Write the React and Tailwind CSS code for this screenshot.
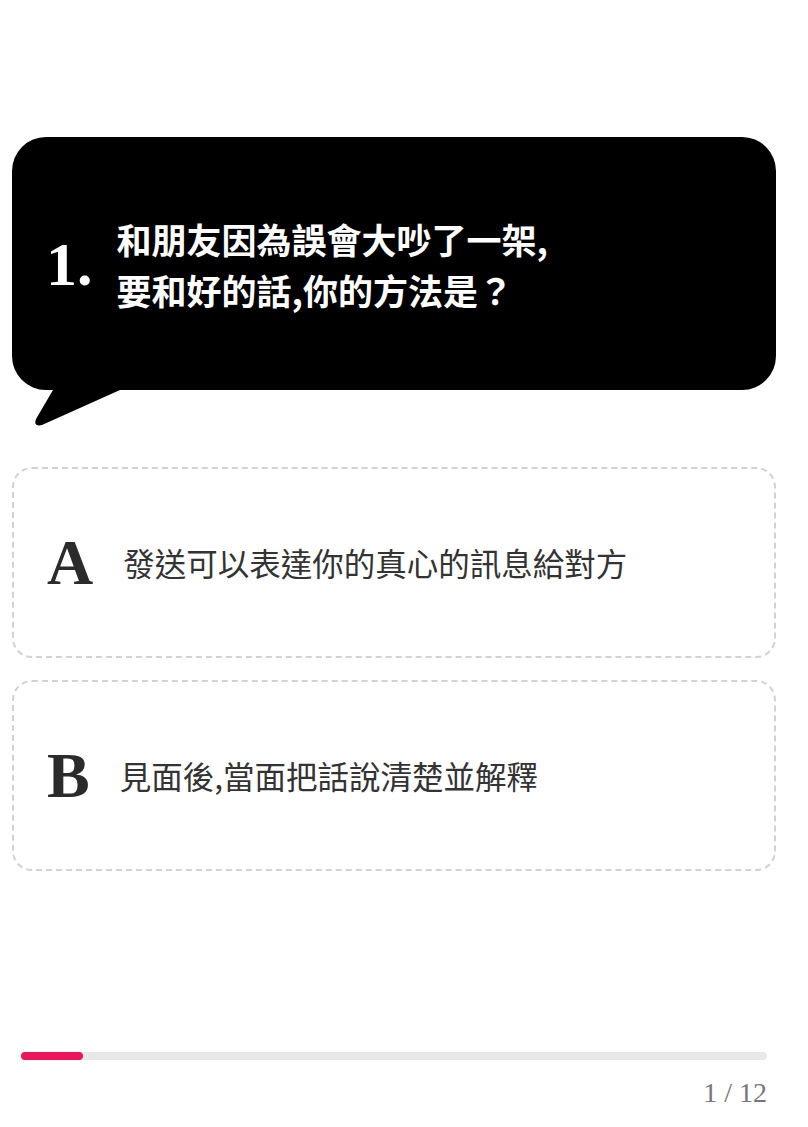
const OPTIONS = [
  { key: "A", text: "發送可以表達你的真心的訊息給對方" },
  { key: "B", text: "見面後,當面把話說清楚並解釋" },
];

const serif = "font-['Liberation_Serif',serif]";
const cjk = "font-['Noto_Sans_CJK_TC','Noto_Sans',sans-serif]";

const App = () => {
  const current = 1;
  const total = 12;

  return (
    <div className="min-h-screen bg-white pl-3 pr-[32px] pt-[137px]">
      {/* question bubble */}
      <div className="relative">
        <div className="relative z-10 flex h-[253px] items-center rounded-[34px] bg-black pl-[34px]">
          <span className={`${serif} text-[62px] font-bold leading-none text-white`}>1.</span>
          <p className={`${cjk} ml-[24px] text-[35px] font-bold leading-[51px] text-white`}>
            和朋友因為誤會大吵了一架,
            <br />
            要和好的話,你的方法是？
          </p>
        </div>
        <svg className="absolute left-0 top-[230px] z-0 h-[70px] w-[130px]" viewBox="0 230 130 70">
          <path d="M41 238 L41 253 L24 282 Q21 290 30 288 L108 253 L110 238 Z" fill="#000" />
        </svg>
      </div>

      {/* options */}
      <div className="mt-[77px] flex flex-col gap-[22px]">
        {OPTIONS.map((o) => (
          <div
            key={o.key}
            className="flex h-[191px] items-center rounded-[20px] border-2 border-dashed border-[#d2d2d2] pl-[33px]"
          >
            <span className={`${serif} text-[64px] font-bold leading-none text-[#2b2b2b]`}>{o.key}</span>
            <span className={`${cjk} ml-[30px] text-[31.5px] text-[#333]`}>{o.text}</span>
          </div>
        ))}
      </div>

      {/* progress */}
      <div className="mt-[181px] pl-[9px] pr-[9px]">
        <div className="h-[8px] w-full rounded-full bg-[#e8e8ec]">
          <div className="h-full rounded-full bg-[#f0145a]" style={{ width: `${(current / total) * 100}%` }} />
        </div>
        <p className={`${serif} mt-[12px] text-right text-[28px] text-[#777]`}>
          {current} / {total}
        </p>
      </div>
    </div>
  );
};

export default App;
